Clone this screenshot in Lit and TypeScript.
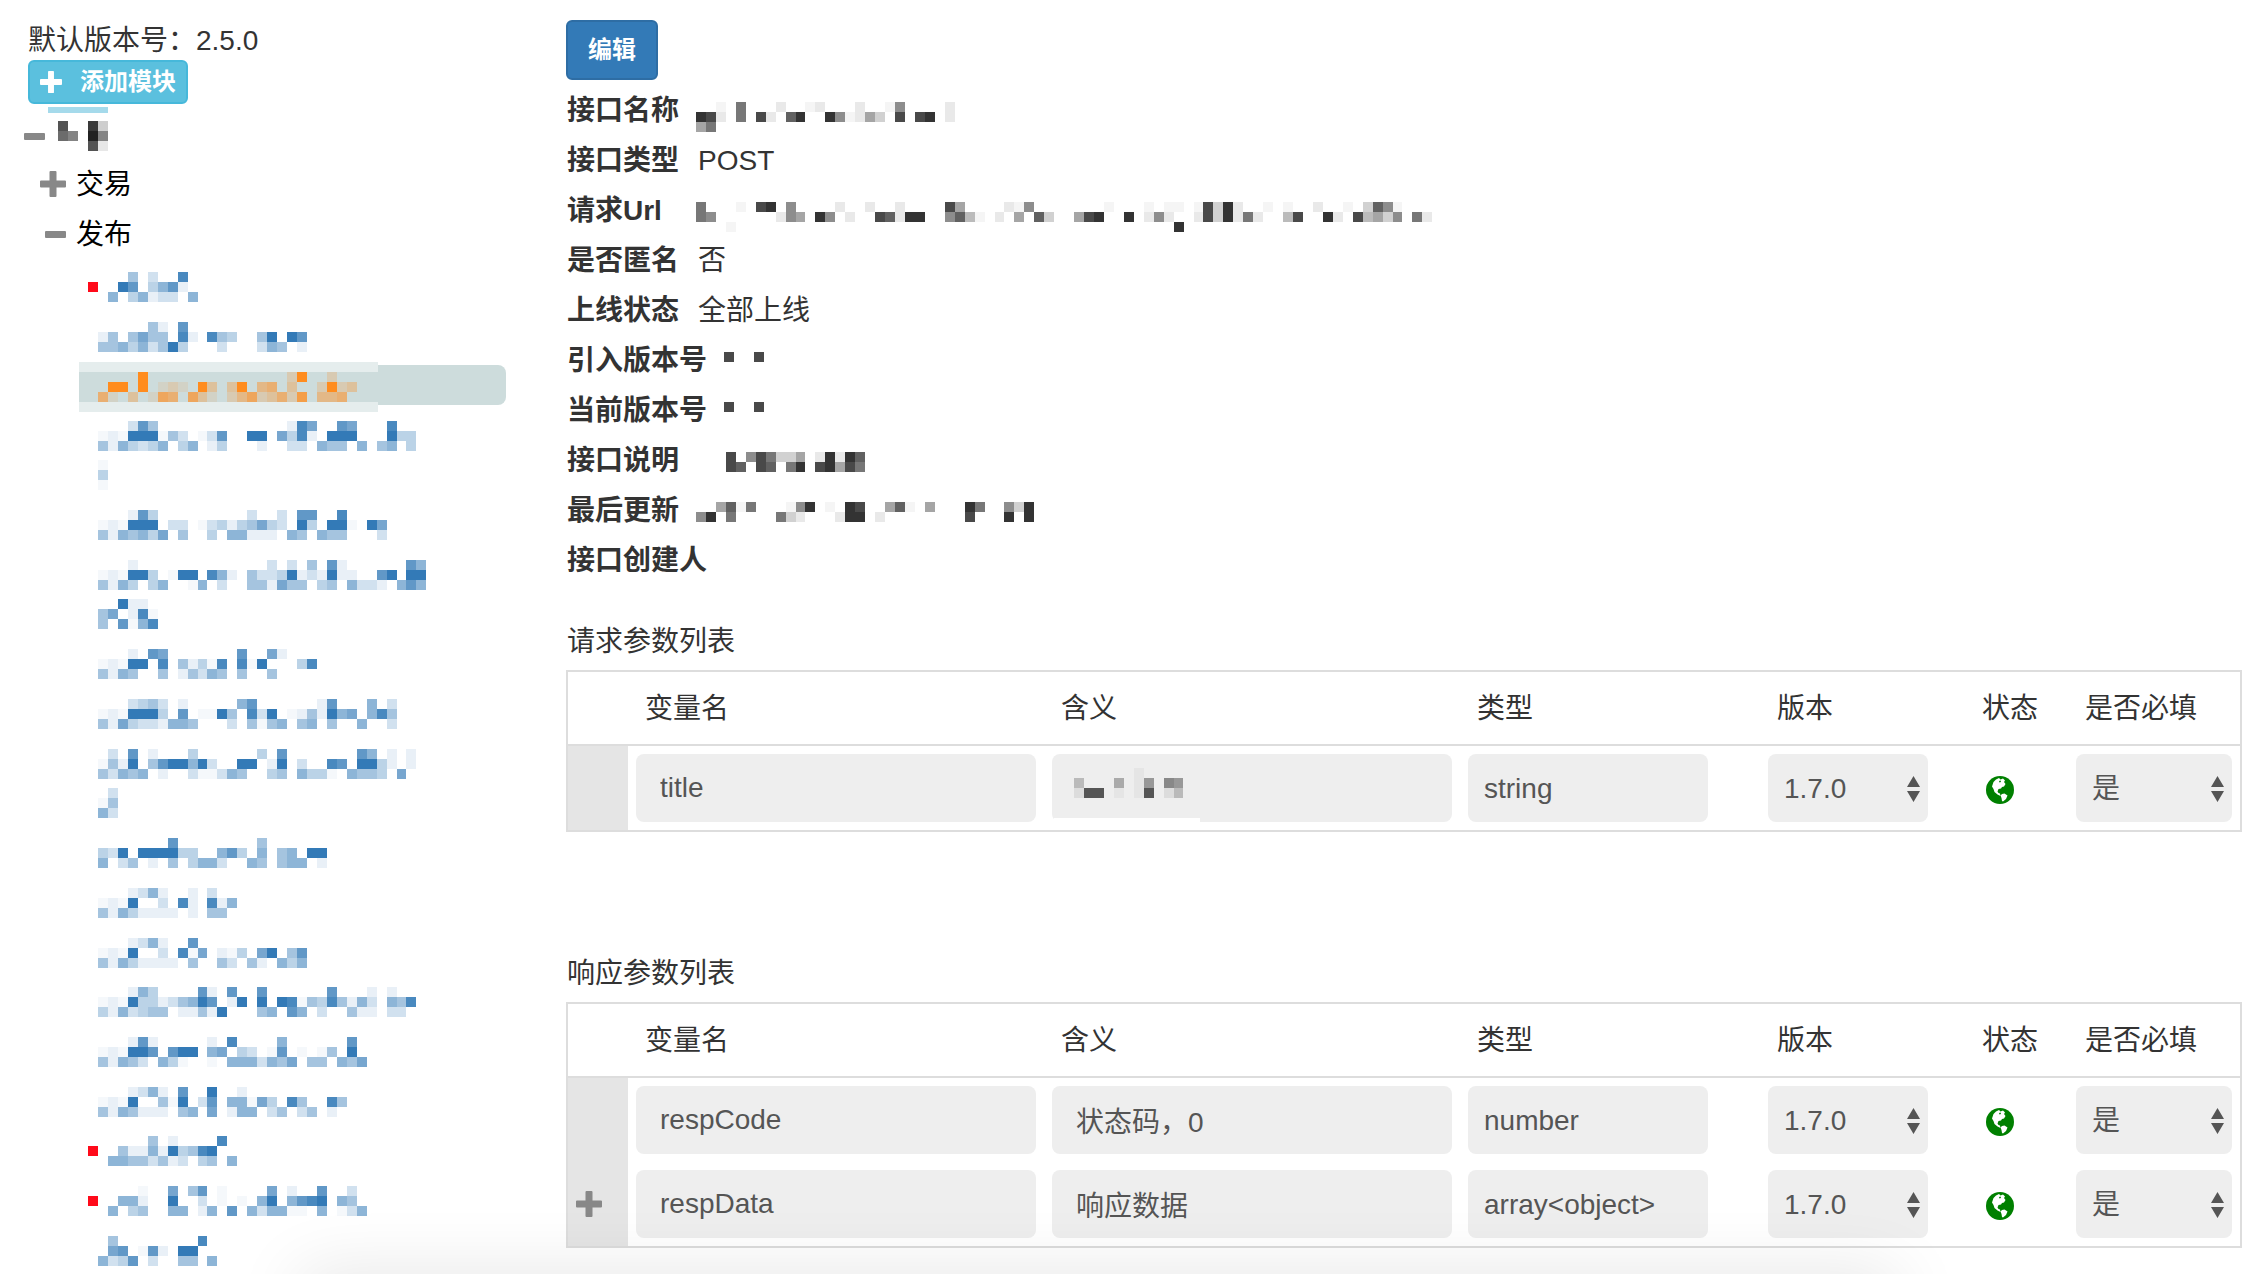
import { LitElement, html, svg, css, nothing } from "lit";
import { customElement, property } from "lit/decorators.js";

/* Masked text: each row is a string, one character per cell.
   "." is empty, "-" is barely visible, 1-9 is the strength of the ink. */
interface Api {
  lines: string[][];
  dot?: boolean;
  active?: boolean;
}

const apis: Api[] = [
  { dot: true, lines: [["...4.2..8", "..97.3571", ".5.35122.5"]] },
  { lines: [[".....41.7", "14.4644.81.843..49.97", "445352493...2...254.1"]] },
  {
    active: true,
    lines: [["....9..............29..2", ".99.9.121.93.39.45.3..2923", "51.3.165.631.24623527.445"]],
  },
  {
    lines: [
      ["...274.............186..76...8", "-1-999-42.-27..99.6381.999...933", "4153235.35.13...1..22.544.5.45.3"],
      ["-", "3", "-"],
    ],
  },
  {
    lines: [["...173.........2..2.77..8", "-1-999.22.-23134632.93.99-.96", "4154536.4..3.55111.54.544...2"]],
  },
  {
    lines: [
      ["...1.............2.2.4.71......75", "-1-993.-99.851.42239121911..79.99", "4153.35..-5.2..441644.34.5221.575"],
      ["..911", "46.18-", "4.7-58"],
    ],
  },
  { lines: [["...1.76.......7..61", "-1-99.8.413-8.8-9...38", "4154..4.14254.4..4"]] },
  {
    lines: [["...2342.1.....57......17...5.2", "-1-9993.7.--94.829.-141956.584", "4163221554...2.4-45.45.4..5..2"]],
  },
  {
    lines: [
      [".2.7.1...3......3.7.......75.1.1", "-419.4799592..99.19.2..87.9931.1", "42545.1..2--254..34.533-.5443.6"],
      [".2", "-4", "52"],
    ],
  },
  { lines: [[".......7........4", "329.999933..573.5.45.99", "5.24.1.4.3552..54.455.1"]] },
  { lines: [["...1251..1.2", "-1-9..2.81.815", "41531111.1.44"]] },
  { lines: [["...1251..7", "-1-9..2.8-6.1-3.69.47", "41531111.4..42.41.535"]] },
  {
    lines: [["...153....71.7..7......7...1.1", "-1-933124597.19.9.98-4384152.548", "3152344.11419...45.75.2..411.22"]],
  },
  { lines: [["...171.....1.8....5......7", "-1-997.799.56.32.-7.-.-4.9", "41542.53-..-.5552546.44.546"]] },
  { lines: [["...1251.7..9..1", "-1-9..4-9.27.55-63.84..84", "4154111.45.6.155.24.24.1"]] },
  { dot: true, lines: [[".....4.1....8", "..4115193489", ".55442412.34.5"]] },
  {
    dot: true,
    lines: [["....-..6.47.-....6.1..7..2", "..551..9..2.-.-.59.5789.54", ".5.34..55.15.7.5255--.5.-25"]],
  },
  { lines: [[".4........8", ".67.-71.99", "5237.2..44.5"]] },
];

const details: { label: string; text?: string; mask?: string[] }[] = [
  {
    label: "接口名称",
    mask: ["..-.6...1..-1...1..-5....1", "981.6.81.79..95-142.8.89.1", "46"],
  },
  { label: "接口类型", text: "POST" },
  {
    label: "请求Url",
    mask: [
      "6...-.89.5....1..1..1....84....1-5.......-...-.--.-8291..-.-..1..-.275-",
      "65......154.95.1..87199..573-.1.4.72..489..9.151..1829161..38..91.83425.61",
      "...-............................................9",
    ],
  },
  { label: "是否匿名", text: "否" },
  { label: "上线状态", text: "全部上线" },
  { label: "引入版本号", mask: ["8..8"] },
  { label: "当前版本号", mask: ["8..8"] },
  { label: "接口说明", mask: ["...8.586224.19197", "...87.87.69.89486"] },
  {
    label: "最后更新",
    mask: ["..47-6...-59.-.98..47-.4...96..529", "59.6....621...199.1........8...9.9"],
  },
  { label: "接口创建人" },
];

interface Param {
  name: string;
  meaning: string;
  mask?: string[];
  type: string;
  version: string;
  required: string;
  expandable?: boolean;
}

const requestParams: Param[] = [
  {
    name: "title",
    meaning: "",
    mask: ["......-", "3...4.-5.65", "199.-.-9.13"],
    type: "string",
    version: "1.7.0",
    required: "是",
  },
];

const responseParams: Param[] = [
  { name: "respCode", meaning: "状态码，0", type: "number", version: "1.7.0", required: "是" },
  { name: "respData", meaning: "响应数据", type: "array<object>", version: "1.7.0", required: "是", expandable: true },
];

const edge = (n: number) => Math.round((n * 199) / 20);

function mosaic(rows: string[]) {
  const w = edge(Math.max(...rows.map((r) => r.length)));
  const h = edge(rows.length);
  return html`<svg class="mosaic" width=${w} height=${h} viewBox="0 0 ${w} ${h}" shape-rendering="crispEdges" aria-hidden="true">
    ${rows.map((row, y) =>
      [...row].map((c, x) =>
        c === "."
          ? nothing
          : svg`<rect x=${edge(x)} y=${edge(y)} width=${edge(x + 1) - edge(x)} height=${edge(y + 1) - edge(y)}
              fill="currentColor" fill-opacity=${c === "-" ? 0.05 : Number(c) / 9}></rect>`,
      ),
    )}
  </svg>`;
}

const plusIcon = (size: number) => html`<svg class="icon" width=${size} height=${size} viewBox="0 0 26 26" aria-hidden="true">
  <path fill="currentColor" d="M10.500 0h5q1 0 1 1v8.500H25q1 0 1 1v5q0 1-1 1h-8.500V25q0 1-1 1h-5q-1 0-1-1v-8.500H1q-1 0-1-1v-5q0-1 1-1h8.500V1q0-1 1-1z"></path>
</svg>`;

const minusIcon = html`<svg class="icon" width="21" height="7" viewBox="0 0 21 7" aria-hidden="true">
  <rect width="21" height="7" rx="1" fill="currentColor"></rect>
</svg>`;

const globeIcon = html`<svg class="globe" width="28" height="28" viewBox="0 0 28 28" role="img" aria-label="已上线">
  <circle cx="14" cy="14" r="14" fill="green"></circle>
  <path fill="#fff" d="M6 10.500L7.500 6 10 3.500l3-1.500 1.500 1.500L17 2.500l2 2-1 1.500 1.500 2-1.500 2.500-2 .5-1 1.500-2.500.5-1 2.500 1 1.500 1.500.5.500 2.500-3-1.500L8.500 16 7.500 13z"></path>
  <path fill="#fff" d="M14.500 19.500l1.500-1.500 2.500-.5 3 2-1.500 3.500-3 2.500-1-.5-.5-3z"></path>
  <path fill="green" d="M13 5l1.500-.5.500 1.500-1.500.5z"></path>
</svg>`;

@customElement("param-table")
export class ParamTable extends LitElement {
  @property() heading = "";
  @property({ attribute: false }) params: Param[] = [];

  static styles = css`
    :host {
      display: block;
    }
    .title {
      margin: 0 0 8px;
      padding: 2px 0 0 1px;
      font-size: 28px;
      font-weight: 400;
      line-height: 40px;
    }
    .table {
      width: 100%;
      table-layout: fixed;
      border-collapse: separate;
      border-spacing: 0;
      border: 2px solid #ddd;
    }
    .w-gutter {
      width: 60px;
    }
    .w-type {
      width: 300px;
    }
    .w-version {
      width: 176px;
    }
    .w-status {
      width: 132px;
    }
    .w-required {
      width: 172px;
    }
    .head {
      height: 70px;
      padding: 2px 0 0 17px;
      border-bottom: 2px solid #ddd;
      font-weight: 400;
      line-height: 40px;
      text-align: left;
      white-space: nowrap;
    }
    .head.status {
      padding-left: 46px;
    }
    .gutter {
      padding: 0 0 0 8px;
      background: #e5e5e5;
      color: #888;
    }
    .cell {
      padding: 8px;
    }
    .cell.status {
      padding: 4px 0 0 50px;
    }
    .toggle {
      display: flex;
      padding: 0;
      border: 0;
      background: none;
      color: inherit;
    }
    .field {
      position: relative;
      display: block;
    }
    .control {
      display: block;
      box-sizing: border-box;
      width: 100%;
      height: 68px;
      margin: 0;
      padding: 0 24px;
      border: 0;
      border-radius: 8px;
      background: #eee;
      color: #555;
      font: inherit;
      appearance: none;
    }
    .narrow {
      padding: 2px 16px 0;
    }
    .type {
      width: 240px;
    }
    .mask {
      position: absolute;
      top: 14px;
      left: 22px;
      color: #555;
    }
    .wipe {
      position: absolute;
      bottom: 0;
      left: 2px;
      width: 146px;
      height: 4px;
      background: #fff;
    }
    .arrows {
      position: absolute;
      top: 22px;
      right: 8px;
      color: #555;
      pointer-events: none;
    }
    .mosaic,
    .icon,
    .globe,
    .arrows {
      display: block;
    }
  `;

  private select(label: string, value: string) {
    return html`<span class="field">
      <select class="control narrow" aria-label=${label}>
        <option>${value}</option>
      </select>
      <svg class="arrows" width="13" height="26" viewBox="0 0 13 26" aria-hidden="true">
        <path fill="currentColor" d="M6.500 0L13 11H0zM6.500 26L0 15h13z"></path>
      </svg>
    </span>`;
  }

  render() {
    return html`
      <h2 class="title">${this.heading}</h2>
      <table class="table" aria-label=${this.heading}>
        <colgroup>
          <col class="w-gutter" />
          <col />
          <col />
          <col class="w-type" />
          <col class="w-version" />
          <col class="w-status" />
          <col class="w-required" />
        </colgroup>
        <thead>
          <tr>
            <th class="head"></th>
            <th class="head" scope="col">变量名</th>
            <th class="head" scope="col">含义</th>
            <th class="head" scope="col">类型</th>
            <th class="head" scope="col">版本</th>
            <th class="head status" scope="col">状态</th>
            <th class="head" scope="col">是否必填</th>
          </tr>
        </thead>
        <tbody>
          ${this.params.map(
            (p) => html`<tr>
              <td class="gutter">
                ${p.expandable ? html`<button class="toggle" aria-label="展开">${plusIcon(26)}</button>` : nothing}
              </td>
              <td class="cell"><input class="control" aria-label="变量名" .value=${p.name} /></td>
              <td class="cell">
                <span class="field">
                  <input class="control" aria-label="含义" .value=${p.meaning} />
                  ${p.mask ? html`<span class="mask">${mosaic(p.mask)}</span><span class="wipe"></span>` : nothing}
                </span>
              </td>
              <td class="cell"><input class="control narrow type" aria-label="类型" .value=${p.type} /></td>
              <td class="cell">${this.select("版本", p.version)}</td>
              <td class="cell status">${globeIcon}</td>
              <td class="cell">${this.select("是否必填", p.required)}</td>
            </tr>`,
          )}
        </tbody>
      </table>
    `;
  }
}

@customElement("app-root")
export class AppRoot extends LitElement {
  static styles = css`
    :host {
      position: relative;
      display: block;
      min-height: 100vh;
      overflow: hidden;
      background: #fff;
      color: #333;
      font-family: "Liberation Sans", "Noto Sans CJK SC", sans-serif;
      font-size: 28px;
      line-height: 40px;
    }
    .layout {
      display: grid;
      grid-template-columns: 510px minmax(0, 1fr);
      column-gap: 56px;
      padding-right: 16px;
    }
    .sidebar {
      padding-top: 22px;
    }
    .version {
      margin: 0;
      padding-left: 28px;
      line-height: 38px;
    }
    .btn {
      display: flex;
      align-items: center;
      border: 2px solid;
      border-radius: 6px;
      color: #fff;
      font-family: inherit;
      font-size: 24px;
      font-weight: 700;
      line-height: 32px;
    }
    .add {
      gap: 18px;
      height: 44px;
      margin-left: 28px;
      padding: 0 10px;
      border-color: #46b8da;
      background: #5bc0de;
    }
    .edit {
      height: 60px;
      padding: 0 20px;
      border-color: #2e6da4;
      background: #337ab7;
    }
    .strip {
      width: 60px;
      height: 6px;
      margin: 3px 0 0 48px;
      background: #a5daeb;
    }
    .node {
      display: flex;
      align-items: center;
      box-sizing: border-box;
      height: 50px;
      padding: 0;
      border: 0;
      background: none;
      color: #000;
      font: inherit;
    }
    .node .icon {
      color: #888;
    }
    .label {
      padding-top: 2px;
    }
    .root {
      gap: 13px;
      height: 46px;
      padding-left: 24px;
      color: #222;
    }
    .child {
      gap: 10px;
      padding-left: 40px;
    }
    .child.open {
      padding-left: 45px;
    }
    .list {
      margin: 0;
      padding: 3px 0 0 79px;
      list-style: none;
    }
    .item {
      display: flex;
      height: 50px;
    }
    .item:nth-child(3n) {
      height: 49px;
    }
    .item.wrapped {
      height: 89px;
    }
    .item:last-child {
      height: 40px;
    }
    .link {
      position: relative;
      display: flex;
      flex: 1;
      flex-direction: column;
      gap: 9px;
      padding: 10px 0 0 19px;
      color: #337ab7;
    }
    .dot {
      position: absolute;
      top: 20px;
      left: 9px;
      width: 10px;
      height: 10px;
      background: #ff0a1a;
    }
    .active {
      z-index: 0;
      color: #ff8c1e;
    }
    .active::before {
      position: absolute;
      z-index: -2;
      top: 3px;
      right: 4px;
      left: 0;
      height: 40px;
      border-radius: 8px;
      background: #cddcdc;
      content: "";
    }
    .active::after {
      position: absolute;
      z-index: -1;
      top: 0;
      left: 0;
      width: 299px;
      height: 30px;
      border: solid #e5eded;
      border-width: 10px 0;
      background: #cddcdc;
      content: "";
    }
    .main {
      padding-top: 20px;
    }
    .details {
      margin: 6px 0 34px;
    }
    .row {
      display: flex;
      gap: 19px;
      height: 50px;
      line-height: 50px;
    }
    .term {
      box-sizing: border-box;
      min-width: 113px;
      padding-left: 1px;
      font-weight: 700;
    }
    .value {
      margin: 0;
    }
    .value .mosaic {
      margin: 16px 0 0 -2px;
    }
    .mosaic,
    .icon {
      display: block;
      flex: none;
    }
    .response {
      margin-top: 120px;
    }
    .shade {
      position: absolute;
      right: 380px;
      bottom: -40px;
      left: 320px;
      height: 20px;
      box-shadow: 0 0 70px 20px rgba(0, 0, 0, 0.11);
      pointer-events: none;
    }
  `;

  render() {
    return html`
      <div class="layout">
        <nav class="sidebar" aria-label="接口目录">
          <p class="version">默认版本号：2.5.0</p>
          <button class="btn add">${plusIcon(22)}<span>添加模块</span></button>
          <div class="strip"></div>
          <button class="node root" aria-label="收起" aria-expanded="true">
            ${minusIcon}${mosaic(["7..82", "65.95", "...71"])}
          </button>
          <button class="node child" aria-expanded="false">${plusIcon(26)}<span class="label">交易</span></button>
          <button class="node child open" aria-expanded="true">${minusIcon}<span class="label">发布</span></button>
          <ul class="list">
            ${apis.map(
              (a, i) => html`<li class="item ${a.lines.length > 1 ? "wrapped" : ""}">
                <a class="link ${a.active ? "active" : ""}" href="#api-${i + 1}" aria-label="接口 ${i + 1}">
                  ${a.dot ? html`<span class="dot"></span>` : nothing}${a.lines.map(mosaic)}
                </a>
              </li>`,
            )}
          </ul>
        </nav>
        <main class="main">
          <button class="btn edit">编辑</button>
          <dl class="details">
            ${details.map(
              (d) => html`<div class="row">
                <dt class="term">${d.label}</dt>
                <dd class="value">${d.mask ? mosaic(d.mask) : d.text}</dd>
              </div>`,
            )}
          </dl>
          <param-table heading="请求参数列表" .params=${requestParams}></param-table>
          <param-table class="response" heading="响应参数列表" .params=${responseParams}></param-table>
        </main>
      </div>
      <div class="shade"></div>
    `;
  }
}
